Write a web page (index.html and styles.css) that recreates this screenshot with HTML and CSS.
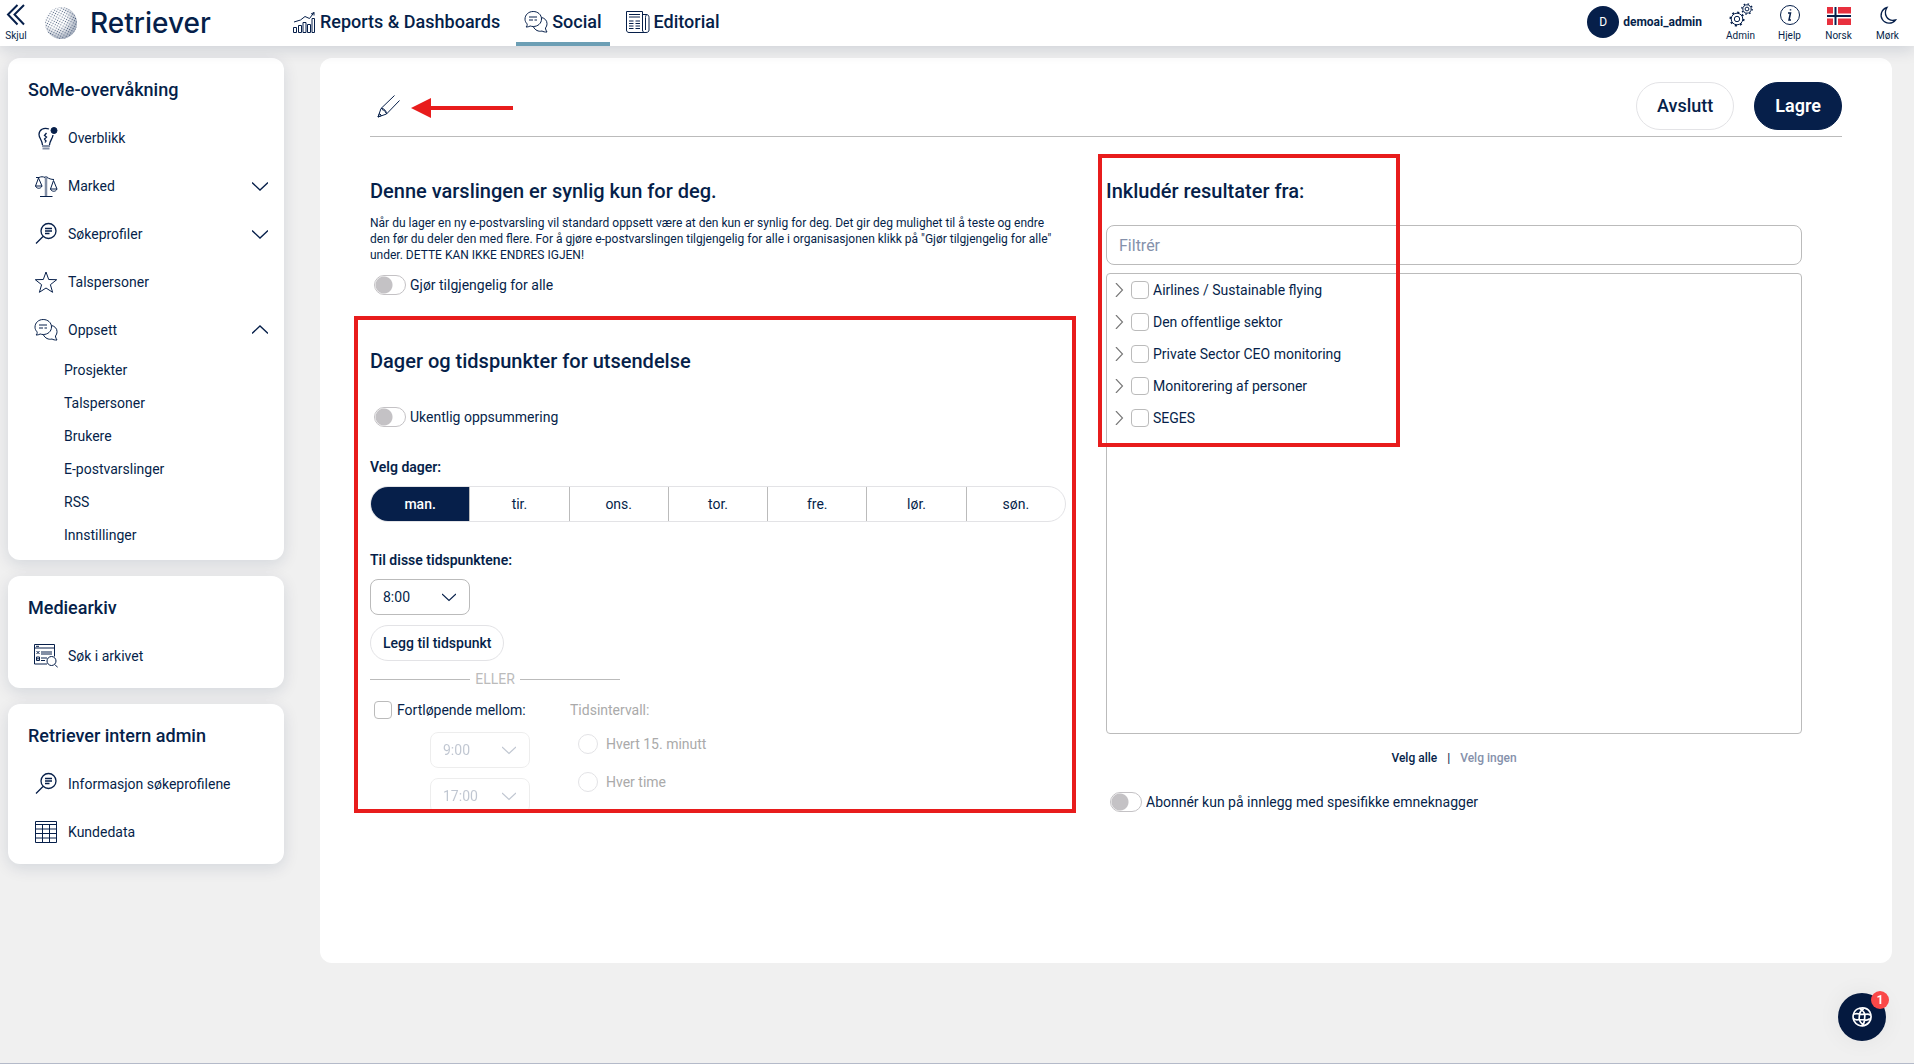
FILE: index.html
```html
<!DOCTYPE html>
<html lang="no">

<head>
	<meta charset="UTF-8">
	<meta name="viewport" content="width=device-width, initial-scale=1">
	<title>Retriever</title>
	<link rel="stylesheet" href="styles.css">
</head>

<body>
	<!-- shared icons -->
	<svg class="symbols" aria-hidden="true">
		<symbol id="chevron" viewBox="0 0 16 16"><path d="M0 4.500l8 7.500 8-7.500" /></symbol>
		<symbol id="chat" viewBox="0 0 24 24">
			<path d="M2 17c1-1 1.500-2 1-3.200C1.800 12.500 1 11 1 9.200 1 4.800 4.500 1.500 9.200 1.500s8.300 3.200 8.300 7.500-3.500 7.500-8.300 7.500c-1 0-2-.2-3-.5-1.200.8-2.700 1-4.200 1z" />
			<path d="M5 7h8M5 10h4M10.500 10H13M17.500 7.500c3 .6 5.500 2.800 5.500 6 0 2-.6 3.400-1.600 4.500.2 1.300.7 3 1.600 4-2 .2-3.900-.3-5-1-3.500 1-7-1-8.500-4" />
		</symbol>
		<symbol id="lens" viewBox="0 0 24 24">
			<circle cx="14.500" cy="9" r="7.500" stroke-width="1.300" />
			<path d="M9 14.500L2 21.500M11 6.500h7M11 9h7M11 11.500h4.500" stroke-width="1.300" />
		</symbol>
	</svg>

	<header class="topbar">
		<button class="tool collapse" type="button">
			<svg class="icon bold" viewBox="0 0 24 24"><path d="M13.500 2L4 11.500l9.500 10M20 2l-9.500 9.500 9.500 10" /></svg>
			<span>Skjul</span>
		</button>
		<a class="logo" href="#">
			<svg viewBox="0 0 34 34" aria-hidden="true">
				<defs>
					<pattern id="dots" width="2.500" height="2.500" patternUnits="userSpaceOnUse" patternTransform="rotate(28)">
						<circle cx="1.250" cy="1.250" r=".6" fill="#061f4a" />
					</pattern>
					<pattern id="dense" width="2" height="2" patternUnits="userSpaceOnUse" patternTransform="rotate(50)">
						<circle cx="1" cy="1" r=".7" fill="#061f4a" />
					</pattern>
					<radialGradient id="shade" cx=".35" cy=".35" r=".7">
						<stop offset=".45" stop-color="#fff" stop-opacity="0" />
						<stop offset="1" stop-color="#fff" />
					</radialGradient>
					<mask id="sphere"><circle cx="17" cy="17" r="16" fill="url(#shade)" /></mask>
				</defs>
				<circle cx="17" cy="17" r="16" fill="url(#dots)" opacity=".7" />
				<rect width="34" height="34" fill="url(#dense)" mask="url(#sphere)" />
			</svg>
			<span>Retriever</span>
		</a>

		<nav class="nav">
			<a href="#">
				<svg class="icon" viewBox="0 0 24 24"><path d="M1.500 22.500v-5h3v5zM6.500 22.500v-7h3v7zM11 22.500v-10h3v10zM15.500 22.500v-8h3v8zM20 22.500V8.500h2.500v14zM2 12l6.500-2L13 6.500l4.500 2L22 2.500M19 4l3-1.500v3" /></svg>
				Reports &amp; Dashboards
			</a>
			<a href="#" class="current">
				<svg class="icon"><use href="#chat" /></svg>
				Social
			</a>
			<a href="#">
				<svg class="icon" viewBox="0 0 24 24">
					<path d="M16.500 20.500V1.500H.5V20c0 1.500 1 2.500 2.500 2.500H20c2 0 3-1 3-2.500V7.500c0-2-1-3-3-3h-3.500M19.500 20V7.500c0-2 1-3 1.500-3M16.500 20c0 1.500 1 2.500 2 2.500" />
					<path d="M3 4.500h11M3 7h11M3 11h4.500M3 13.500h4.500M3 16h4.500M3 18.500h4.500M9.500 11H14M9.500 13.500H14M9.500 16H14M9.500 18.500H14" />
				</svg>
				Editorial
			</a>
		</nav>

		<div class="tools">
			<button class="user" type="button"><span class="avatar">D</span>demoai_admin</button>
			<button class="tool" type="button">
				<svg class="icon" viewBox="0 0 24 24">
					<circle cx="8" cy="16" r="5.800" />
					<circle cx="8" cy="16" r="6.800" stroke-width="1.500" stroke-dasharray="2.140 3.200" />
					<circle cx="8" cy="16" r="2.700" />
					<circle cx="18" cy="6" r="4.200" />
					<circle cx="18" cy="6" r="5.200" stroke-width="1.300" stroke-dasharray="1.600 2.480" />
					<circle cx="18" cy="6" r="1.900" />
				</svg>
				<span>Admin</span>
			</button>
			<button class="tool" type="button">
				<svg class="icon" viewBox="0 0 24 24"><circle cx="12" cy="12" r="9.500" /><path d="M10 10h2.500l-1.500 7h2M12.500 6.300v1.200" stroke-width="1.500" /></svg>
				<span>Hjelp</span>
			</button>
			<button class="tool" type="button">
				<svg class="icon flag" viewBox="0 0 24 24">
					<path d="M0 4h24v18H0z" fill="#e8303e" />
					<path d="M0 13h24M8.500 4v18" stroke="#fff" stroke-width="5" />
					<path d="M0 13h24M8.500 4v18" stroke="#061f4a" stroke-width="2" />
				</svg>
				<span>Norsk</span>
			</button>
			<button class="tool" type="button">
				<svg class="icon" viewBox="0 0 24 24"><path d="M11 4.500A8 8 0 1 0 19.500 17C11 19 7 11 11 4.500z" stroke-width="1.300" /></svg>
				<span>Mørk</span>
			</button>
		</div>
	</header>

	<div class="page">
		<aside class="sidebar">
			<nav class="card">
				<h2>SoMe-overvåkning</h2>
				<a class="item" href="#">
					<svg class="icon" viewBox="0 0 24 24">
						<path d="M15 3C9.500 1 5 4 5 8.500c0 3.500 3 5 3.500 10.500M15.500 19c.5-5 3-6 3.500-10M12.500 7l-2 2.500 2 1.500-2 2 1.500 2-1 1.500" stroke-width="1.300" />
						<path d="M8 20h8M8.500 22.500h7" stroke="#838fa5" stroke-width="2" />
						<circle cx="20" cy="4.500" r="3" fill="#061f4a" />
					</svg>
					Overblikk
				</a>
				<a class="item" href="#">
					<svg class="icon" viewBox="0 0 24 24">
						<path d="M12 2v20" stroke="#838fa5" stroke-width="2.500" />
						<path d="M6 22.500h12.500M2 3.500h3c2-1 4-1 6 0M13 3.500c2 1 4 2 7 2M4.500 4L1.500 12h6.500zM19.500 6.500L16.500 15h6.500zM1.500 12c1 3 5.500 3 6.500 0M16.500 15c1 3 5.500 3 6.500 0" />
					</svg>
					Marked
					<svg class="arrow"><use href="#chevron" /></svg>
				</a>
				<a class="item" href="#">
					<svg class="icon"><use href="#lens" /></svg>
					Søkeprofiler
					<svg class="arrow"><use href="#chevron" /></svg>
				</a>
				<a class="item" href="#">
					<svg class="icon" viewBox="0 0 24 24"><path d="M12 2l2.700 7.500 8 .2-6.300 5 2.200 7.600L12 18l-6.600 4.300 2.200-7.600-6.300-5 8-.2z" /></svg>
					Talspersoner
				</a>
				<a class="item" href="#">
					<svg class="icon"><use href="#chat" /></svg>
					Oppsett
					<svg class="arrow up"><use href="#chevron" /></svg>
				</a>
				<ul>
					<li><a href="#">Prosjekter</a></li>
					<li><a href="#">Talspersoner</a></li>
					<li><a href="#">Brukere</a></li>
					<li><a href="#">E-postvarslinger</a></li>
					<li><a href="#">RSS</a></li>
					<li><a href="#">Innstillinger</a></li>
				</ul>
			</nav>
			<nav class="card">
				<h2>Mediearkiv</h2>
				<a class="item" href="#">
					<svg class="icon" viewBox="0 0 24 24">
						<path d="M13 20H.5V.5h20v12M.5 4h20M2 2.300h3M7 8h11M7 10h11M7 14h6M7 16.500h4M2.500 7l3 3M5.500 7l-3 3M2.500 13h3v3.500h-3zM2.500 14.800h3" />
						<circle cx="17.500" cy="17" r="4.500" /><path d="M20.800 20.500l3 3" />
					</svg>
					Søk i arkivet
				</a>
			</nav>
			<nav class="card">
				<h2>Retriever intern admin</h2>
				<a class="item" href="#">
					<svg class="icon"><use href="#lens" /></svg>
					Informasjon søkeprofilene
				</a>
				<a class="item" href="#">
					<svg class="icon" viewBox="0 0 24 24"><path d="M1.500 1.500h21v21h-21zM1.500 4.500h21M1.500 9h21M1.500 13.500h21M1.500 18h21M8.500 4.500v18M15.500 4.500v18" /></svg>
					Kundedata
				</a>
			</nav>
		</aside>

		<main class="main">
			<div class="toolbar">
				<button class="edit" type="button" aria-label="Rediger navn">
					<svg class="icon" viewBox="0 0 24 24"><path d="M17.500 1.500L4 14.500l-3 8.500 8.500-3L22.500 6.500M4 14.500c2.500-.5 5.500 2 5.500 5.500M5 15.500l2.500 1 1.500 2.500M1 23l1.500-3.500 2 2z" /></svg>
				</button>
				<svg class="pointer" viewBox="0 0 102 20" aria-hidden="true"><path d="M0 10L20 0v8h82v4H20v8z" /></svg>
				<button class="button" type="button">Avslutt</button>
				<button class="button primary" type="button">Lagre</button>
			</div>

			<div class="columns">
				<div class="column">
					<h1>Denne varslingen er synlig kun for deg.</h1>
					<p class="info">Når du lager en ny e-postvarsling vil standard oppsett være at den kun er synlig for deg. Det gir deg mulighet til å teste og endre den før du deler den med flere. For å gjøre e-postvarslingen tilgjengelig for alle i organisasjonen klikk på "Gjør tilgjengelig for alle" under. DETTE KAN IKKE ENDRES IGJEN!</p>
					<label class="switch"><input type="checkbox">Gjør tilgjengelig for alle</label>

					<section class="schedule">
						<h1>Dager og tidspunkter for utsendelse</h1>
						<label class="switch"><input type="checkbox">Ukentlig oppsummering</label>

						<h3>Velg dager:</h3>
						<div class="days">
							<button type="button" class="active">man.</button>
							<button type="button">tir.</button>
							<button type="button">ons.</button>
							<button type="button">tor.</button>
							<button type="button">fre.</button>
							<button type="button">lør.</button>
							<button type="button">søn.</button>
						</div>

						<h3><label for="time">Til disse tidspunktene:</label></h3>
						<div class="select">
							<select id="time"><option>8:00</option></select>
							<svg><use href="#chevron" /></svg>
						</div>
						<button class="add" type="button">Legg til tidspunkt</button>
						<div class="or">ELLER</div>

						<div class="interval">
							<div class="between">
								<label class="check"><input type="checkbox">Fortløpende mellom:</label>
								<div class="select disabled">
									<select aria-label="Fra" disabled><option>9:00</option></select>
									<svg><use href="#chevron" /></svg>
								</div>
								<div class="select disabled">
									<select aria-label="Til" disabled><option>17:00</option></select>
									<svg><use href="#chevron" /></svg>
								</div>
							</div>
							<div class="every">
								<span>Tidsintervall:</span>
								<label><input type="radio" name="every" disabled>Hvert 15. minutt</label>
								<label><input type="radio" name="every" disabled>Hver time</label>
							</div>
						</div>
					</section>
				</div>

				<div class="column sources">
					<h1>Inkludér resultater fra:</h1>
					<input class="filter" type="text" placeholder="Filtrér" aria-label="Filtrér">
					<div class="tree">
						<div class="node"><svg><use href="#chevron" /></svg><label class="check"><input type="checkbox">Airlines / Sustainable flying</label></div>
						<div class="node"><svg><use href="#chevron" /></svg><label class="check"><input type="checkbox">Den offentlige sektor</label></div>
						<div class="node"><svg><use href="#chevron" /></svg><label class="check"><input type="checkbox">Private Sector CEO monitoring</label></div>
						<div class="node"><svg><use href="#chevron" /></svg><label class="check"><input type="checkbox">Monitorering af personer</label></div>
						<div class="node"><svg><use href="#chevron" /></svg><label class="check"><input type="checkbox">SEGES</label></div>
					</div>
					<div class="choose">
						<button type="button">Velg alle</button>
						<span>|</span>
						<button type="button" class="muted">Velg ingen</button>
					</div>
					<label class="switch"><input type="checkbox">Abonnér kun på innlegg med spesifikke emneknagger</label>
				</div>
			</div>
		</main>
	</div>

	<button class="help" type="button" aria-label="Chat">
		<svg viewBox="0 0 24 24">
			<path d="M9 1.500C14 .5 19 2 21.500 6c2 4 1.500 9-1 12.500C17 22.500 12 23.500 7.500 21.500 3 19.500.5 14.500 1.500 9.500 2.500 5 5 2.500 9 1.500z" />
			<path d="M9 8.500l6.500.5-.5 6.500-6.500-.5zM9 8.500c-3-1-4.500-.5-7 0M9 8.500c.5-3 2-5 5-6.500M15.500 9c-1-3-3-5.500-6.500-7.500M15.500 9c2.500-1 5-.5 7 1M15 15.500c3 .5 5 0 6.500-1.500M15 15.500c0 3-1 5-3.500 7M8.500 15c1 3 3 5.500 6 7M8.500 15c-3 1-5 .5-7-1.500" />
		</svg>
		<span class="badge">1</span>
	</button>
</body>

</html>
```
FILE: styles.css
```css
*,
*::before,
*::after {
	box-sizing: border-box;
}

body {
	margin: 0;
	min-height: 100vh;
	background: #f0f0f0;
	border-bottom: 1px solid #b4bac9;
	color: #061f4a;
	font-family: Roboto, sans-serif;
	font-size: 14px;
	line-height: 20px;
}

a {
	color: inherit;
	text-decoration: none;
}

button,
input,
select {
	font: inherit;
	color: inherit;
	margin: 0;
}

button {
	background: none;
	border: none;
	padding: 0;
	cursor: pointer;
}

h1,
h2,
h3 {
	margin: 0;
	font-weight: 500;
}

h1 {
	font-size: 20px;
	line-height: 24px;
}

h2 {
	font-size: 18px;
	padding: 22px 20px 14px;
}

h3 {
	font-size: 14px;
	font-weight: 600;
	margin-bottom: 9px;
}

svg {
	fill: none;
	stroke: #061f4a;
	flex: none;
}

.symbols {
	display: none;
}

.icon {
	width: 24px;
	height: 24px;
	stroke-width: 1;
}

.icon.bold {
	stroke-width: 2;
}

.icon.flag {
	stroke: none;
}

/* top bar */
.topbar {
	position: relative;
	z-index: 1;
	display: flex;
	height: 46px;
	background: #fff;
	box-shadow: 0 4px 16px rgba(6, 31, 74, .14);
}

.tool {
	display: flex;
	flex-direction: column;
	align-items: center;
	padding-top: 3px;
	width: 49px;
	font-size: 10px;
	line-height: 18px;
}

.collapse {
	width: 32px;
}

.logo {
	display: flex;
	align-items: center;
	gap: 12px;
	width: 252px;
	padding: 0 0 0 12px;
	font: 500 28px/44px Inter, sans-serif;
}

.logo svg {
	width: 34px;
	height: 34px;
	stroke: none;
}

.nav {
	display: flex;
	gap: 8px;
	font-size: 18px;
	font-weight: 500;
}

.nav a {
	display: flex;
	align-items: center;
	gap: 4px;
	padding: 2px 8px 0;
	border-bottom: 4px solid transparent;
}

.nav .current {
	border-color: #6c9fb5;
}

.tools {
	display: flex;
	margin-left: auto;
	padding-right: 2px;
}

.user {
	display: flex;
	align-items: center;
	gap: 4px;
	padding: 0 14px 2px 0;
	font-size: 12px;
	font-weight: 700;
}

.avatar {
	width: 32px;
	border-radius: 50%;
	background: #061f4a;
	color: #fff;
	font-weight: 400;
	line-height: 32px;
	text-align: center;
}

/* page */
.page {
	display: grid;
	grid-template-columns: 276px 1fr;
	gap: 36px;
	align-items: start;
	padding: 12px 22px 0 8px;
}

.sidebar {
	display: grid;
	gap: 16px;
}

.card {
	padding-bottom: 8px;
	background: #fff;
	border-radius: 12px;
	box-shadow: 0 4px 16px rgba(6, 31, 74, .12);
}

.item {
	display: flex;
	align-items: center;
	gap: 10px;
	height: 48px;
	padding: 0 16px 0 26px;
}

.arrow {
	width: 16px;
	height: 16px;
	margin-left: auto;
	stroke-width: 1.3;
}

.arrow.up {
	transform: rotate(180deg);
}

.card ul {
	margin: 0;
	padding: 0 0 0 56px;
	list-style: none;
	line-height: 33px;
}

.main {
	min-height: calc(100vh - 159px);
	padding: 24px 50px;
	background: #fff;
	border-radius: 12px;
}

.toolbar {
	display: flex;
	align-items: center;
	padding-bottom: 6px;
	border-bottom: 1px solid #bbb;
}

.edit {
	height: 24px;
	margin-left: 7px;
}

.pointer {
	width: 102px;
	height: 20px;
	margin: 4px auto 0 10px;
	fill: #e81c1c;
	stroke: none;
}

.button {
	padding: 0 20px;
	border: 1px solid #e3e3e6;
	border-radius: 24px;
	font-size: 18px;
	font-weight: 500;
	line-height: 46px;
}

.primary {
	margin-left: 20px;
	border-color: #061f4a;
	background: #061f4a;
	color: #fff;
	font-weight: 600;
}

.columns {
	display: grid;
	grid-template-columns: 1fr 1fr;
	padding-top: 42px;
}

.column {
	padding-right: 40px;
}

.info {
	margin: 12px 0;
	font-size: 12px;
	line-height: 16px;
}

/* form controls */
.switch {
	display: flex;
	align-items: center;
	gap: 4px;
	padding-left: 4px;
}

.switch input {
	appearance: none;
	width: 32px;
	height: 20px;
	border: 1px solid #c4c2c5;
	border-radius: 10px;
	background: radial-gradient(circle at 9px 9px, #c4c2c5 8px, #fff 9px);
}

.check {
	display: flex;
	align-items: center;
	gap: 4px;
}

.check input {
	appearance: none;
	width: 18px;
	height: 18px;
	border: 1px solid #bbb;
	border-radius: 4px;
}

.select {
	display: grid;
	width: 100px;
	align-items: center;
}

.select > * {
	grid-area: 1 / 1;
}

.select select {
	appearance: none;
	height: 36px;
	padding: 0 12px;
	border: 1px solid #bbb;
	border-radius: 8px;
	background: #fff;
	opacity: 1;
}

.select svg {
	width: 14px;
	height: 14px;
	margin-right: 14px;
	justify-self: end;
	stroke-width: 1.3;
	pointer-events: none;
}

.select.disabled {
	opacity: .25;
}

/* sending times */
.schedule {
	position: relative;
	margin-top: 54px;
}

.schedule::after,
.sources::after {
	content: "";
	position: absolute;
	border: 4px solid #e81c1c;
	pointer-events: none;
}

.schedule::after {
	inset: -33px -10px -4px -16px;
}

.schedule .switch {
	margin: 34px 0 30px;
}

.days {
	display: flex;
	height: 36px;
	margin-bottom: 28px;
	border: 1px solid #e3e3e6;
	border-radius: 18px;
	overflow: hidden;
}

.days button {
	flex: 1;
}

.days button + button {
	border-left: 1px solid #bbb;
}

.days .active {
	background: #061f4a;
	color: #fff;
	font-weight: 500;
}

.add {
	display: block;
	margin: 10px 0;
	padding: 0 12px;
	border: 1px solid #e3e3e6;
	border-radius: 18px;
	font-weight: 500;
	line-height: 34px;
}

.or {
	display: flex;
	align-items: center;
	gap: 5px;
	width: 250px;
	color: #bbb;
	line-height: 16px;
}

.or::before,
.or::after {
	content: "";
	flex: 1;
	border-top: 1px solid #bbb;
}

.interval {
	display: flex;
	max-height: 122px;
	padding-top: 13px;
	overflow: hidden;
}

.between {
	width: 200px;
	padding-left: 4px;
}

.between .check {
	gap: 5px;
	margin-bottom: 12px;
}

.between .select {
	margin: 0 0 10px 56px;
}

.every {
	color: #aaa;
}

.every label {
	display: flex;
	align-items: center;
	gap: 8px;
	height: 38px;
	padding-left: 8px;
}

.every span {
	display: block;
	margin-bottom: 5px;
}

.every input {
	appearance: none;
	width: 20px;
	height: 20px;
	border: 1px solid #e3e3e6;
	border-radius: 50%;
}

/* search profiles */
.sources {
	position: relative;
}

.sources::after {
	top: -25px;
	left: -8px;
	width: 302px;
	height: 293px;
}

.filter {
	display: block;
	width: 100%;
	height: 40px;
	margin: 22px 0 8px;
	padding: 0 12px;
	border: 1px solid #bbb;
	border-radius: 8px;
	font-size: 16px;
}

.filter::placeholder {
	color: #8591ab;
}

.tree {
	min-height: 461px;
	border: 1px solid #bbb;
	border-radius: 4px;
}

.node {
	display: flex;
	align-items: center;
	gap: 5px;
	height: 32px;
	padding-left: 5px;
}

.node svg {
	width: 14px;
	height: 14px;
	transform: rotate(-90deg);
	stroke: #777;
	stroke-width: 1.3;
}

.choose {
	display: flex;
	justify-content: center;
	gap: 10px;
	margin: 14px 0 24px;
	font-size: 12px;
	font-weight: 500;
}

.choose .muted {
	color: #8591ab;
}

/* chat button */
.help {
	position: fixed;
	right: 28px;
	bottom: 23px;
	width: 48px;
	height: 48px;
	border-radius: 50%;
	background: #04193f;
	box-shadow: 0 0 24px rgba(0, 0, 0, .06);
}

.help svg {
	display: block;
	width: 20px;
	height: 20px;
	margin: auto;
	stroke: #fff;
	stroke-width: 2;
}

.badge {
	position: absolute;
	top: -2px;
	right: -3px;
	width: 18px;
	border-radius: 50%;
	background: #fa4848;
	color: #fff;
	font-size: 12px;
	font-weight: 700;
	line-height: 18px;
}
```
